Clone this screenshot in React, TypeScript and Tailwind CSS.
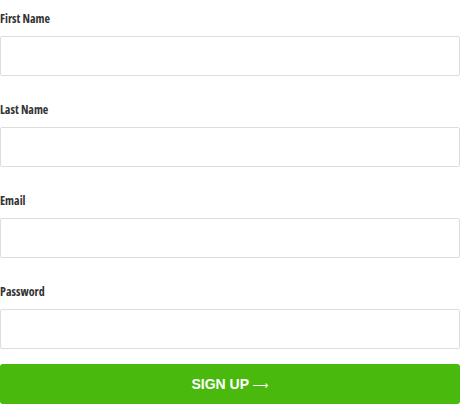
const fields = ["First Name", "Last Name", "Email", "Password"];

export default function App() {
  return (
    <div className="w-[460px] h-[404px] bg-white overflow-hidden">
      <form className="flex flex-col">
        {fields.map((label) => (
          <div key={label} className="flex flex-col mb-[15px]">
            <label
              className="h-[36px] flex items-center pt-[1px] text-[12px] font-bold text-[#333] [font-stretch:75%]"
              style={{ fontFamily: '"Open Sans", "DejaVu Sans Condensed", sans-serif' }}
            >
              {label}
            </label>
            <input
              type={label === "Password" ? "password" : label === "Email" ? "email" : "text"}
              className="h-[40px] w-full border border-[#dddddd] rounded-[2px] bg-white outline-none"
            />
          </div>
        ))}
        <button
          type="button"
          className="h-[40px] w-full rounded-[3px] bg-[#4ab90e] text-white text-[14px] font-bold"
          style={{ fontFamily: '"Liberation Sans", Arial, sans-serif' }}
        >
          SIGN UP{" "}
          <span className="font-normal text-[11px]" style={{ fontFamily: '"DejaVu Sans", sans-serif' }}>
            ⟶
          </span>
        </button>
      </form>
    </div>
  );
}
